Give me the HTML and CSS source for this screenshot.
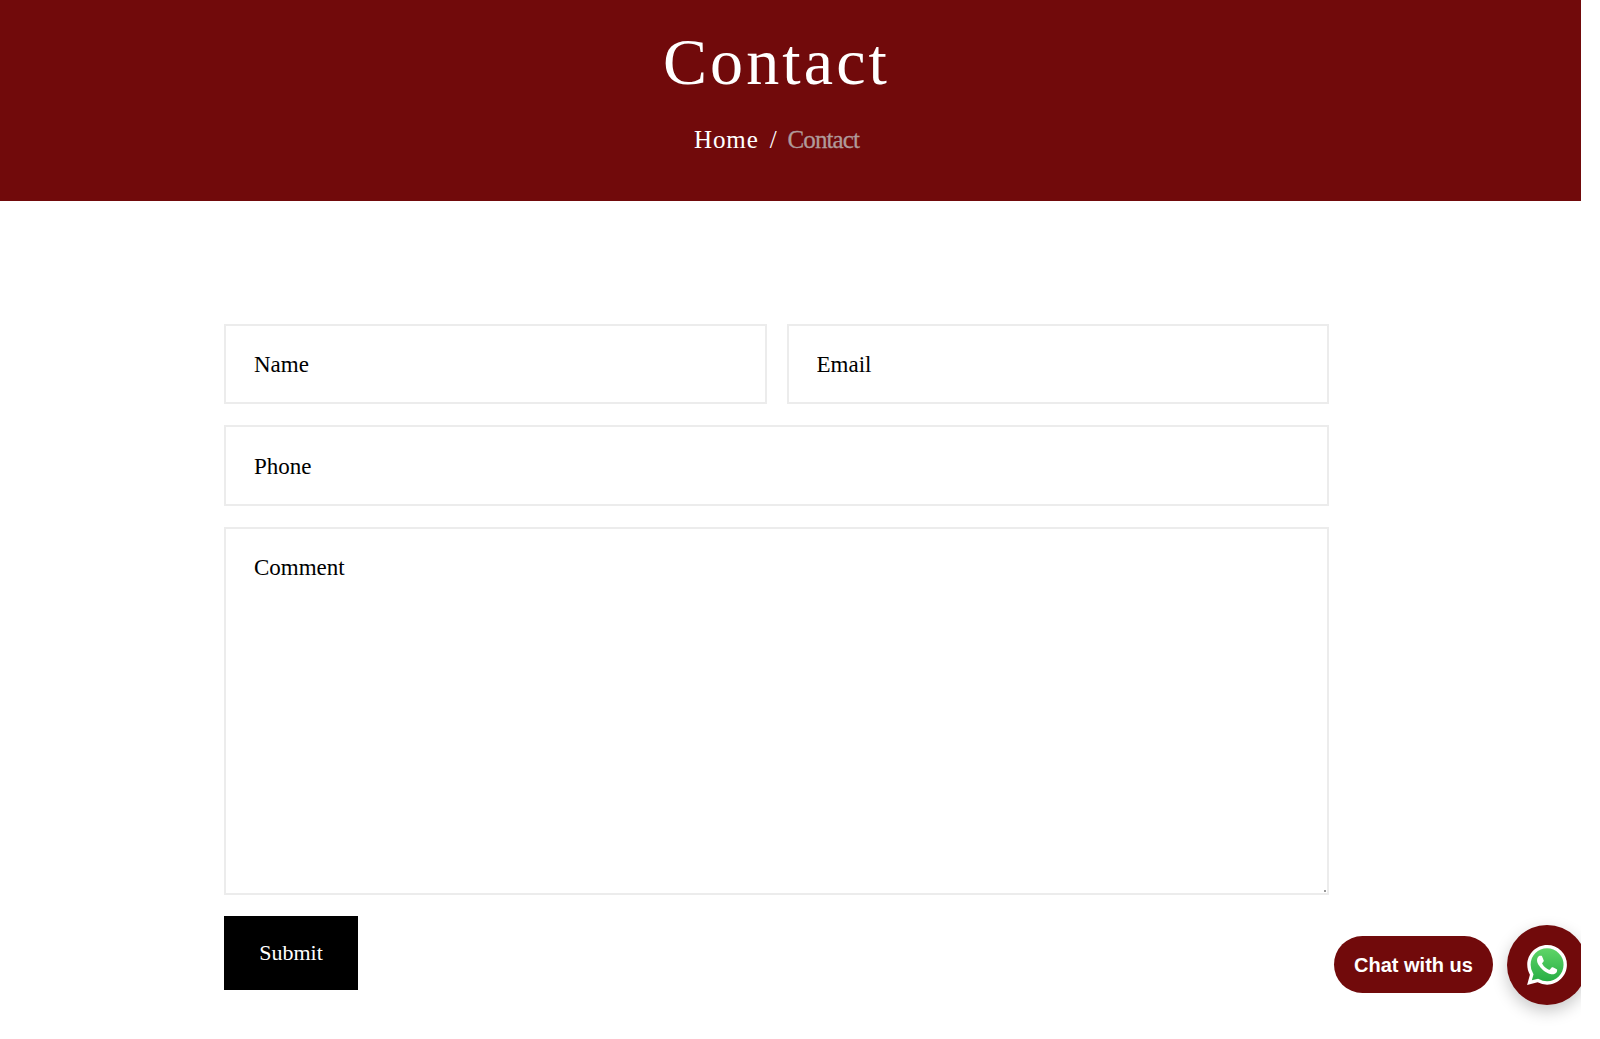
FILE: index.html
```html
<!DOCTYPE html>
<html lang="en">
<head>
    <meta charset="UTF-8">
    <meta name="viewport" content="width=device-width, initial-scale=1.0">
    <title>Contact</title>
    <link rel="stylesheet" href="styles.css">
</head>
<body>
    <div class="page">
        <header class="banner">
            <h1 class="banner-title">Contact</h1>
            <nav class="crumbs">
                <a class="crumb" href="#">Home</a>
                <span class="crumb-sep">/</span>
                <span class="crumb-current">Contact</span>
            </nav>
        </header>

        <form class="contact-form">
            <div class="form-row">
                <input class="field" type="text" placeholder="Name">
                <input class="field" type="email" placeholder="Email">
            </div>
            <input class="field field-phone" type="tel" placeholder="Phone">
            <textarea class="field field-comment" placeholder="Comment"></textarea>
            <button class="submit-btn" type="button">Submit</button>
        </form>

        <div class="chat-widget">
            <span class="chat-label">Chat with us</span>
            <a class="chat-btn" href="#" aria-label="WhatsApp">
                <svg class="chat-icon" viewBox="0 0 24 24" width="40" height="40">
                    <defs>
                        <linearGradient id="waGreen" x1="0" y1="0" x2="0" y2="1">
                            <stop offset="0" stop-color="#5fd568"/>
                            <stop offset="1" stop-color="#28ae45"/>
                        </linearGradient>
                    </defs>
                    <path fill="#fff" d="M20.464 3.488A11.815 11.815 0 0012.05 0C5.495 0 .16 5.335.157 11.892c0 2.096.547 4.142 1.588 5.945L.057 24l6.305-1.654a11.882 11.882 0 005.683 1.448h.005c6.554 0 11.89-5.335 11.893-11.893a11.821 11.821 0 00-3.48-8.413z"/>
                    <path fill="url(#waGreen)" d="M12.051 21.785h-.004a9.87 9.87 0 01-5.031-1.378l-.361-.214-3.741.982.998-3.648-.235-.374a9.86 9.86 0 01-1.51-5.26c.001-5.45 4.436-9.884 9.888-9.884 2.64 0 5.122 1.03 6.988 2.898a9.825 9.825 0 012.893 6.994c-.003 5.45-4.437 9.884-9.885 9.884"/>
                    <path fill="#fff" d="M17.472 14.382c-.297-.149-1.758-.867-2.03-.967-.273-.099-.471-.148-.67.15-.197.297-.767.966-.94 1.164-.173.199-.347.223-.644.075-.297-.15-1.255-.463-2.39-1.475-.883-.788-1.48-1.761-1.653-2.059-.173-.297-.018-.458.13-.606.134-.133.298-.347.446-.52.149-.174.198-.298.298-.497.099-.198.05-.371-.025-.52-.075-.149-.669-1.612-.916-2.207-.242-.579-.487-.5-.669-.51-.173-.008-.371-.01-.57-.01-.198 0-.52.074-.792.372-.272.297-1.04 1.016-1.04 2.479 0 1.462 1.065 2.875 1.213 3.074.149.198 2.096 3.2 5.077 4.487.709.306 1.262.489 1.694.625.712.227 1.36.195 1.871.118.571-.085 1.758-.719 2.006-1.413.248-.694.248-1.289.173-1.413-.074-.124-.272-.198-.57-.347"/>
                </svg>
            </a>
        </div>
    </div>
</body>
</html>
```

FILE: styles.css
```css
* {
    box-sizing: border-box;
}
html, body {
    margin: 0;
    height: 100%;
    overflow: hidden;
    background-color: #fff;
}
body {
    font-family: "Liberation Serif", serif;
    color: #000;
}
.page {
    position: relative;
    width: 1581px;
    height: 100vh;
    overflow: hidden;
}

.banner {
    height: 201px;
    padding: 27px 28px 0 0;
    background-color: #710a0b;
    color: #fff;
    text-align: center;
}
.banner-title {
    margin: 0;
    font-size: 66px;
    line-height: 70px;
    font-weight: normal;
    letter-spacing: 3.1px;
}
.crumbs {
    display: flex;
    justify-content: center;
    gap: 11px;
    margin-top: 28px;
    font-size: 25px;
    line-height: 30px;
}
.crumb {
    color: #fff;
    text-decoration: none;
    letter-spacing: 0.9px;
}
.crumb-current {
    color: #b09a9a;
    letter-spacing: -0.9px;
    -webkit-text-stroke: 0.3px #b09a9a;
}

.contact-form {
    display: flex;
    flex-direction: column;
    gap: 21px;
    width: 1105px;
    margin: 123px 0 0 224px;
}
.form-row {
    display: flex;
    gap: 20px;
}
.form-row .field {
    flex: 1;
    min-width: 0;
}
.field {
    display: block;
    width: 100%;
    height: 80px;
    padding: 2px 28px 0;
    border: 2px solid #ececec;
    background-color: #fff;
    font-family: inherit;
    font-size: 23px;
    color: #000;
    outline: none;
}
.field::placeholder {
    color: #000;
    opacity: 1;
}
.field-phone {
    height: 81px;
}
.field-comment {
    height: 368px;
    padding: 26px 28px;
    line-height: 26px;
    resize: none;
    background-image: linear-gradient(#999, #999);
    background-repeat: no-repeat;
    background-size: 2px 2px;
    background-position: right 1px bottom 1px;
}
.submit-btn {
    width: 134px;
    height: 74px;
    padding: 0;
    border: none;
    background-color: #000;
    color: #fff;
    font-family: inherit;
    font-size: 22px;
}

.chat-widget {
    position: absolute;
    left: 1334px;
    top: 925px;
    display: flex;
    align-items: flex-start;
    gap: 14px;
}
.chat-label {
    width: 159px;
    height: 57px;
    margin-top: 11px;
    border-radius: 29px;
    background-color: #710a0b;
    color: #fff;
    font-family: "Liberation Sans", sans-serif;
    font-size: 20px;
    font-weight: bold;
    line-height: 59px;
    text-align: center;
}
.chat-btn {
    display: flex;
    align-items: center;
    justify-content: center;
    width: 80px;
    height: 80px;
    border-radius: 50%;
    background-color: #710a0b;
    box-shadow: 0 6px 16px rgba(0, 0, 0, 0.22);
}
```
